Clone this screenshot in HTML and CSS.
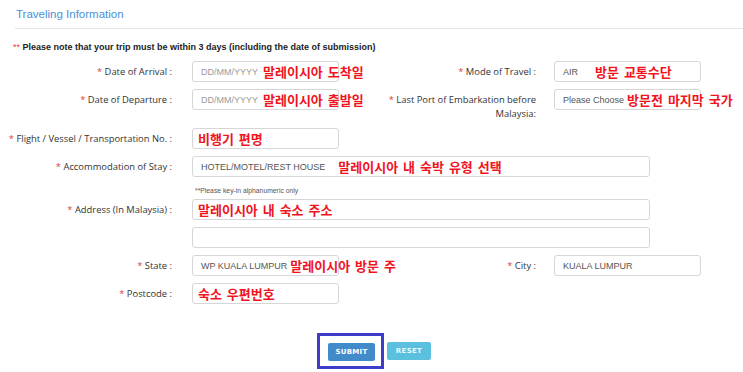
FILE: index.html
```html
<!DOCTYPE html>
<html lang="en">

<head>
    <meta charset="UTF-8">
    <meta name="viewport" content="width=device-width, initial-scale=1.0">
    <title>Traveling Information</title>
    <link rel="stylesheet" href="styles.css">
</head>

<body>

    <div class="panel">
        <div class="panel-heading">
            <h3 class="panel-title">Traveling Information</h3>
        </div>

        <p class="notice"><span class="req">**</span> Please note that your trip must be within 3 days (including the date of submission)</p>

        <div class="form-row">
            <label class="lbl"><span class="req">*</span> Date of Arrival :</label>
            <div class="field">
                <span class="ph">DD/MM/YYYY</span>
                <span class="memo gap-s">말레이시아 도착일</span>
            </div>
            <label class="lbl lbl-right"><span class="req">*</span> Mode of Travel :</label>
            <div class="field">
                <span class="val">AIR</span>
                <span class="memo gap-l">방문 교통수단</span>
            </div>
        </div>

        <div class="form-row">
            <label class="lbl"><span class="req">*</span> Date of Departure :</label>
            <div class="field">
                <span class="ph">DD/MM/YYYY</span>
                <span class="memo gap-s">말레이시아 출발일</span>
            </div>
            <label class="lbl lbl-right"><span class="req">*</span> Last Port of Embarkation before<br>Malaysia:</label>
            <div class="field">
                <span class="val">Please Choose</span>
                <span class="memo gap-xs">방문전 마지막 국가</span>
            </div>
        </div>

        <div class="form-row">
            <label class="lbl"><span class="req">*</span> Flight / Vessel / Transportation No. :</label>
            <div class="field">
                <span class="memo">비행기 편명</span>
            </div>
        </div>

        <div class="form-row">
            <label class="lbl"><span class="req">*</span> Accommodation of Stay :</label>
            <div class="field field-wide">
                <span class="val">HOTEL/MOTEL/REST HOUSE</span>
                <span class="memo gap-m">말레이시아 내 숙박 유형 선택</span>
            </div>
        </div>

        <p class="hint">**Please key-in alphanumeric only</p>

        <div class="form-row">
            <label class="lbl"><span class="req">*</span> Address (In Malaysia) :</label>
            <div class="field field-wide">
                <span class="memo">말레이시아 내 숙소 주소</span>
            </div>
        </div>

        <div class="form-row">
            <label class="lbl"></label>
            <div class="field field-wide"></div>
        </div>

        <div class="form-row">
            <label class="lbl"><span class="req">*</span> State :</label>
            <div class="field">
                <span class="val">WP KUALA LUMPUR</span>
                <span class="memo gap-xs">말레이시아 방문 주</span>
            </div>
            <label class="lbl lbl-right"><span class="req">*</span> City :</label>
            <div class="field">
                <span class="val">KUALA LUMPUR</span>
            </div>
        </div>

        <div class="form-row">
            <label class="lbl"><span class="req">*</span> Postcode :</label>
            <div class="field">
                <span class="memo">숙소 우편번호</span>
            </div>
        </div>

        <div class="actions">
            <span class="highlight">
                <button class="btn btn-primary">SUBMIT</button>
            </span>
            <button class="btn btn-info">RESET</button>
        </div>
    </div>

</body>

</html>
```

FILE: styles.css
```css
body {
    margin: 0;
    padding: 0;
    background: #ffffff;
    color: #333;
    font-family: "Open Sans", Arial, sans-serif;
}

.panel {
    width: 743px;
}

.panel-heading {
    margin-left: 15px;
    padding: 4px 0 4px 1px;
    border-bottom: 1px solid #e6e6e6;
}

.panel-title {
    margin: 0;
    font-family: Arial, "Liberation Sans", sans-serif;
    font-size: 11.5px;
    font-weight: normal;
    line-height: 20px;
    color: #4a90d9;
}

.notice {
    margin: 12px 0 8px 13px;
    font-family: Arial, "Liberation Sans", sans-serif;
    font-size: 9px;
    font-weight: bold;
    line-height: 12px;
    color: #222;
}

.req {
    color: #e0413b;
    font-weight: normal;
}

.form-row {
    display: flex;
    align-items: flex-start;
    margin-bottom: 7px;
}

.lbl {
    width: 172px;
    flex: none;
    padding-top: 4px;
    font-size: 9.4px;
    line-height: 14px;
    text-align: right;
    white-space: nowrap;
    color: #333;
}

.lbl-right {
    width: 179px;
}

.field {
    display: flex;
    align-items: center;
    box-sizing: border-box;
    width: 147px;
    height: 21px;
    margin: 0 18px 0 20px;
    padding: 0 8px;
    border: 1px solid #d6d6d6;
    border-radius: 3px;
    flex: none;
    white-space: nowrap;
    font-family: Arial, "Liberation Sans", sans-serif;
    font-size: 9px;
}

.lbl-right + .field {
    margin-left: 18px;
}

.field-wide {
    width: 458px;
}

.ph {
    color: #9a9a9a;
}

.val {
    color: #555;
}

.memo {
    margin-left: -3px;
    font-family: "Noto Sans CJK KR", sans-serif;
    font-size: 13px;
    font-weight: bold;
    word-spacing: 2px;
    color: #f0141e;
}

.gap-xs {
    margin-left: 3px;
}

.gap-s {
    margin-left: 5px;
}

.gap-m {
    margin-left: 13px;
}

.gap-l {
    margin-left: 17px;
}

.hint {
    margin: 10px 0 4px 195px;
    font-family: Arial, "Liberation Sans", sans-serif;
    font-size: 6.8px;
    line-height: 8px;
    color: #555;
}

.actions {
    display: flex;
    align-items: center;
    margin: 29px 0 0 317px;
}

.highlight {
    display: inline-block;
    padding: 7px 6px 5px 8px;
    border: 3px solid #3d3dc9;
}

.btn {
    display: block;
    height: 18px;
    padding: 0;
    border: none;
    border-radius: 2px;
    font-family: Verdana, "DejaVu Sans", sans-serif;
    font-size: 7px;
    font-weight: bold;
    letter-spacing: 0.3px;
    color: #fff;
}

.btn-primary {
    width: 47px;
    background: #428bca;
}

.btn-info {
    width: 44px;
    margin-left: 3px;
    background: #5bc0de;
    color: #e8f7fc;
}
```
